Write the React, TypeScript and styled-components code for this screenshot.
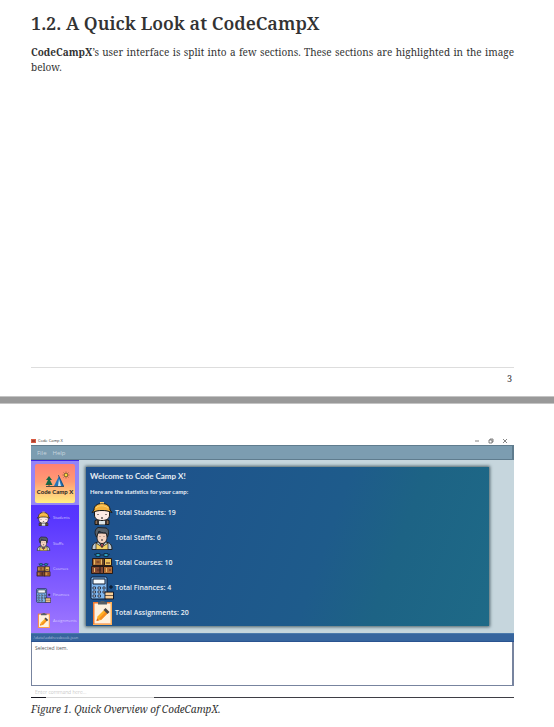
import React from "react";
import styled, { createGlobalStyle } from "styled-components";

const serif = '"Noto Serif", "Droid Serif", "DejaVu Serif", "Liberation Serif", serif';
const sans = '"Open Sans", "Noto Sans", sans-serif';
const display = 'Lato, "Open Sans", sans-serif';

const GlobalStyle = createGlobalStyle`
  *, *::before, *::after { box-sizing: border-box; }
  body { margin: 0; background: #fff; color: #333; font-family: ${serif}; }
  button, input, textarea { font: inherit; color: inherit; }
`;

const Sheet = styled.section`
  padding: 0 40px 0 31px;
`;

const FirstSheet = styled(Sheet)`
  display: flex;
  flex-direction: column;
  min-height: 396px;
  padding-top: 10px;
`;

const Heading = styled.h2`
  margin: 0;
  font-size: 18px;
  line-height: 26px;
  font-weight: 600;
  color: #333;
`;

const Paragraph = styled.p`
  margin: 9px 0 0;
  font-size: 10px;
  line-height: 15px;
  text-align: justify;
`;

const PageFooter = styled.footer`
  margin-top: auto;
  height: 29px;
  padding: 3px 2px 0 0;
  border-top: 1px solid #ddd;
  font-size: 9px;
  line-height: 15px;
  text-align: right;
`;

const PageBreak = styled.hr`
  height: 8px;
  margin: 0;
  border: solid #c4c4c4;
  border-width: 1px 0;
  background: #999;
`;

const SecondSheet = styled(Sheet)`
  padding-top: 33px;
`;

const Figure = styled.figure`
  margin: 0;
`;

const Caption = styled.figcaption`
  margin-top: 3px;
  font-size: 10px;
  line-height: 16px;
  font-style: italic;
`;

const AppWindow = styled.div`
  font-family: ${sans};
`;

const TitleBar = styled.header`
  display: flex;
  align-items: center;
  gap: 2px;
  height: 8px;
  font-size: 4px;
  line-height: 8px;
  color: #333;
`;

const AppMark = styled.span`
  width: 5px;
  height: 4px;
  border: 1px solid #d95b43;
  background: #a44130;
`;

const WindowControls = styled.div`
  display: flex;
  gap: 8px;
  margin-left: auto;
  padding-right: 6px;
`;

const WindowButton = styled.button`
  display: flex;
  padding: 0;
  border: 0;
  background: none;
`;

const MenuBar = styled.nav`
  display: flex;
  gap: 6px;
  height: 15px;
  padding: 0 6px;
  border: solid #5f7c8e;
  border-width: 1px 2px 1px 0;
  background: #7c9db1;
`;

const MenuButton = styled.button`
  padding: 0;
  border: 0;
  background: none;
  font-size: 6px;
  line-height: 14px;
  font-weight: 400;
  color: #c8d6df;
`;

const Workspace = styled.div`
  display: flex;
  height: 173px;
  background: #c6d6dd;
`;

const Sidebar = styled.nav`
  display: flex;
  flex-direction: column;
  flex: none;
  width: 48px;
  background: linear-gradient(#4929fa, #5937ff 35%, #a079ff);
`;

const LogoButton = styled.button`
  display: flex;
  align-items: center;
  justify-content: center;
  height: 45px;
  padding: 0;
  border: 0;
  border-top: 1px solid #3b24e8;
  background: #9384f8;
`;

const LogoTile = styled.span`
  display: flex;
  flex-direction: column;
  align-items: center;
  width: 40px;
  height: 39px;
  border-radius: 2px;
  background: linear-gradient(#ff8173, #ff9b73 45%, #ffee82);
  font-family: ${display};
  font-size: 6px;
  line-height: 8px;
  font-weight: 700;
  color: #222;
  white-space: nowrap;
`;

const SideButton = styled.button`
  display: flex;
  flex: 1;
  align-items: center;
  gap: 2px;
  min-height: 0;
  padding: 1px 0 0 5px;
  border: 0;
  background: none;
  font-size: 4px;
  line-height: 6px;
  color: #d5c9ff;
`;

const Dashboard = styled.main`
  flex: 1;
  padding: 7px 25px 7px 7px;
`;

const Panel = styled.section`
  height: 159px;
  padding: 3px 4px;
  background: linear-gradient(110deg, #1e508c, #1e5b8b 58%, #1d6385 74%, #1e6a87);
  box-shadow: 0 0 3px 1px #4b6067;
  color: #e8eef4;
`;

const PanelTitle = styled.h3`
  margin: 0;
  font-family: ${display};
  font-size: 8px;
  line-height: 12px;
  font-weight: 700;
`;

const PanelText = styled.p`
  margin: 5px 0 0;
  font-family: ${display};
  font-size: 6px;
  line-height: 10px;
  font-weight: 700;
`;

const Stats = styled.ul`
  display: grid;
  grid-template-rows: repeat(5, 1fr);
  height: 126px;
  margin: 3px 0 0;
  padding: 0;
  list-style: none;
`;

const Stat = styled.li`
  display: flex;
  align-items: center;
  gap: 1px;
  font-size: 7px;
  line-height: 12px;
  font-weight: 600;
`;

const StatusBar = styled.div`
  height: 9px;
  padding: 0 2px;
  border-top: 1px solid #4b7aac;
  border-bottom: 1px solid #2a5390;
  background: #36659e;
  font-size: 4px;
  line-height: 7px;
  color: #a9bfda;
`;

const ResultBox = styled.textarea`
  display: block;
  width: 100%;
  height: 44px;
  padding: 2px 3px;
  border: 1px solid #77849f;
  border-top: 0;
  border-right-width: 2px;
  border-radius: 0;
  outline: 0;
  resize: none;
  background: #fff;
  font-size: 5px;
  line-height: 9px;
  color: #555;
`;

const CommandInput = styled.input`
  display: block;
  width: 100%;
  height: 11px;
  padding: 0 4px;
  border: 0;
  outline: 0;
  background: #fff;
  font-size: 5px;
  font-weight: 300;
  &::placeholder { color: #aaa; opacity: 1; }
`;

const Rule = styled.div`
  display: grid;
  grid-template-columns: 15px 108px 1fr;
  height: 1px;
  background: #d4d4d4;
  &::before { content: ""; grid-column: 1; background: #15151f; }
  &::after { content: ""; grid-column: 3; background: #3e3e45; }
`;

type IconProps = { size: number };

const StudentIcon = ({ size }: IconProps) => (
  <svg width={size} height={size} viewBox="0 0 24 24" aria-hidden="true" stroke="#171717" strokeLinejoin="round">
    <path d="M5 23.5v-4l3-1h8l3 1v4z" fill="#8b6b51" />
    <path d="M9 19h6v4.500H9z" fill="#dce4e7" stroke="none" />
    <path d="M8 18.500v5M16 18.500v5" stroke="#2c292b" strokeWidth="1.600" />
    <path d="M4.500 9h15v5c0 3.500-3 5.500-7.500 5.500S4.500 17.500 4.500 14z" fill="#ffebe5" />
    <path d="M4 9c0-4 3-6.500 8-6.500S20 5 20 9l2 2.500c-4-1.500-6-2-10-2s-6 .5-10 2z" fill="#f4b23c" />
    <path d="M10 1h4v1.500h-4z" fill="#f7c864" stroke="none" />
    <path d="M6 7c2-3 9-3 12 0" stroke="#ffd272" fill="none" />
    <path d="M8 13v1M16 13v1M11 17h2" fill="none" />
  </svg>
);

const StaffIcon = ({ size }: IconProps) => (
  <svg width={size} height={size} viewBox="0 0 24 24" aria-hidden="true" stroke="#202124" strokeLinejoin="round">
    <path d="M2 23.500c0-5 2-7 7-7.500h6c5 .5 7 2.500 7 7.500z" fill="#c1cbd3" />
    <path d="M6 23.500V17l6 4 6-4v6.500z" fill="#f5cf65" strokeWidth=".7" />
    <path d="m8.500 15 3.500 6 3.500-6z" fill="#f6f6f6" />
    <path d="m12 17-1 2 1 3 1-3z" fill="#cc3746" strokeWidth=".4" />
    <path d="M7 7h10v4c0 4-2 6.500-5 6.500S7 15 7 11z" fill="#f5d2bf" />
    <path d="M6.500 11C4 7 5 3 8 1.500l8 .5c3 1 3 5 1.500 9L16 7c-4 0-6-1-7-2z" fill="#59616a" />
    <path d="M10 10.500v.5M14 10.500v.5M11 14h2" />
  </svg>
);

const CoursesIcon = ({ size }: IconProps) => (
  <svg width={size} height={size} viewBox="0 0 24 24" aria-hidden="true" stroke="#251b19">
    <path d="M6 2.500h4v3H6zM14 2.500h4v3h-4z" fill="#2b9fc0" stroke="#123047" />
    <path d="M10 4h4M4 3l2 1M20 3l-2 1" stroke="#123047" />
    <path d="M2.500 7.500h13v7h-13z" fill="#a96b35" />
    <path d="M14.500 7.500h7v7h-7z" fill="#f0c45b" />
    <path d="M1.500 15.500h13v7h-13z" fill="#844934" />
    <path d="M13.500 15.500h9v7h-9z" fill="#b36c35" />
    <path d="M4.500 8.500v5M11.500 8.500v5M4.500 17v4M16.500 17v4" stroke="#e8bd68" />
    <path d="M6.500 11h3M16 12h4M7 19h4M19 19h2" stroke="#5b2d22" />
    <path d="M13 8v6.500M10 16v6" />
  </svg>
);

const FinancesIcon = ({ size }: IconProps) => (
  <svg width={size} height={size} viewBox="0 0 24 24" aria-hidden="true" stroke="#111d32">
    <rect x="1" y="1" width="16" height="22" rx="1.500" fill="#80b7ee" />
    <path d="M3 3h12v5H3z" fill="#f7fbfd" />
    <path d="M3 11h2.500v2H3zM8 11h2.500v2H8zM13 11h2v2h-2zM3 15h2.500v2H3zM8 15h2.500v2H8zM13 15h2v2h-2zM3 19h2.500v2H3zM8 19h2.500v2H8z" fill="#dbeaf7" strokeWidth=".8" />
    <path d="M15 16h8.500v7H15z" fill="#f1b66e" />
    <path d="M15.500 18h7.500M15.500 21h7.500" stroke="#fff3dc" strokeWidth=".8" />
    <path d="M15 19.500h8" strokeWidth=".6" />
    <path d="M19 11h4M21 9v4" stroke="#09101c" />
  </svg>
);

const AssignmentsIcon = ({ size }: IconProps) => (
  <svg width={size} height={size} viewBox="0 0 24 24" aria-hidden="true">
    <path d="M3 1h19v23H3z" fill="#f47b30" />
    <path d="M20 1h2v23H3v-1h17z" fill="#ffb058" />
    <path d="M4.500 2.500h16v20h-16z" fill="#fff2df" />
    <path d="M8 1h2l1-1h3l1 1h2v2.500H8z" fill="#596065" />
    <path d="m6.500 20 1-4.500L14 9l3.500 3.500L11 19z" fill="#ffb126" />
    <path d="M9 17.500 15.500 11l2 1.500L11 19z" fill="#f68c1e" />
    <path d="m13.500 9 2-2 4 4-2 2z" fill="#4d4542" />
    <path d="m6.500 20 2.500-.7-1.800-1.800z" fill="#dc5b26" />
  </svg>
);

const CampDrawing = () => (
  <svg width="38" height="24" viewBox="0 0 38 24" aria-hidden="true">
    <path d="m13 12-3 4h2l-2.500 5h7L14 16h2z" fill="#166746" />
    <path d="M13 20v2" stroke="#733f25" />
    <path d="m18 22 5-10 5 10z" fill="#2474b9" />
    <path d="m22 22 1-7 2 7z" fill="#d9e4e8" />
    <path d="m22.300 11 5 11" stroke="#174368" strokeWidth=".7" />
    <path d="M10 22.500h18" stroke="#27353b" strokeWidth=".8" />
    <path d="M30 7.500v7M26.500 11h7M27.500 8.500l5 5M32.500 8.500l-5 5" stroke="#6b542b" strokeWidth=".6" />
    <circle cx="30" cy="11" r="1.700" fill="#ffdb3c" stroke="#5e4d2a" strokeWidth=".6" />
  </svg>
);

const sections = [
  { name: "Students", total: 19, Icon: StudentIcon },
  { name: "Staffs", total: 6, Icon: StaffIcon },
  { name: "Courses", total: 10, Icon: CoursesIcon },
  { name: "Finances", total: 4, Icon: FinancesIcon },
  { name: "Assignments", total: 20, Icon: AssignmentsIcon },
];

const windowControls = [
  { label: "Minimize", path: "M1 3h4" },
  { label: "Restore", path: "M1 2h3v3H1zM2 2V1h3v3H4" },
  { label: "Close", path: "m1 1 4 4M5 1 1 5" },
];

export default function App() {
  return (
    <>
      <GlobalStyle />
      <FirstSheet>
        <Heading>1.2. A Quick Look at CodeCampX</Heading>
        <Paragraph>
          <strong>CodeCampX</strong>’s user interface is split into a few sections. These sections are highlighted in the image below.
        </Paragraph>
        <PageFooter>3</PageFooter>
      </FirstSheet>
      <PageBreak />
      <SecondSheet>
        <Figure>
          <AppWindow>
            <TitleBar>
              <AppMark />
              <span>Code Camp X</span>
              <WindowControls>
                {windowControls.map(({ label, path }) => (
                  <WindowButton key={label} aria-label={label}>
                    <svg width="6" height="6" viewBox="0 0 6 6" fill="none" stroke="#666" strokeWidth=".8">
                      <path d={path} />
                    </svg>
                  </WindowButton>
                ))}
              </WindowControls>
            </TitleBar>
            <MenuBar>
              <MenuButton>File</MenuButton>
              <MenuButton>Help</MenuButton>
            </MenuBar>
            <Workspace>
              <Sidebar>
                <LogoButton>
                  <LogoTile>
                    <CampDrawing />
                    <span>Code Camp X</span>
                  </LogoTile>
                </LogoButton>
                {sections.map(({ name, Icon }) => (
                  <SideButton key={name}>
                    <Icon size={15} />
                    <span>{name}</span>
                  </SideButton>
                ))}
              </Sidebar>
              <Dashboard>
                <Panel>
                  <PanelTitle>Welcome to Code Camp X!</PanelTitle>
                  <PanelText>Here are the statistics for your camp:</PanelText>
                  <Stats>
                    {sections.map(({ name, total, Icon }) => (
                      <Stat key={name}>
                        <Icon size={24} />
                        <span>Total {name}: {total}</span>
                      </Stat>
                    ))}
                  </Stats>
                </Panel>
              </Dashboard>
            </Workspace>
            <StatusBar>.\data\addressbook.json</StatusBar>
            <ResultBox readOnly aria-label="Result" value="Selected item." />
            <CommandInput aria-label="Command" placeholder="Enter command here..." />
            <Rule />
          </AppWindow>
          <Caption>Figure 1. Quick Overview of CodeCampX.</Caption>
        </Figure>
      </SecondSheet>
    </>
  );
}
